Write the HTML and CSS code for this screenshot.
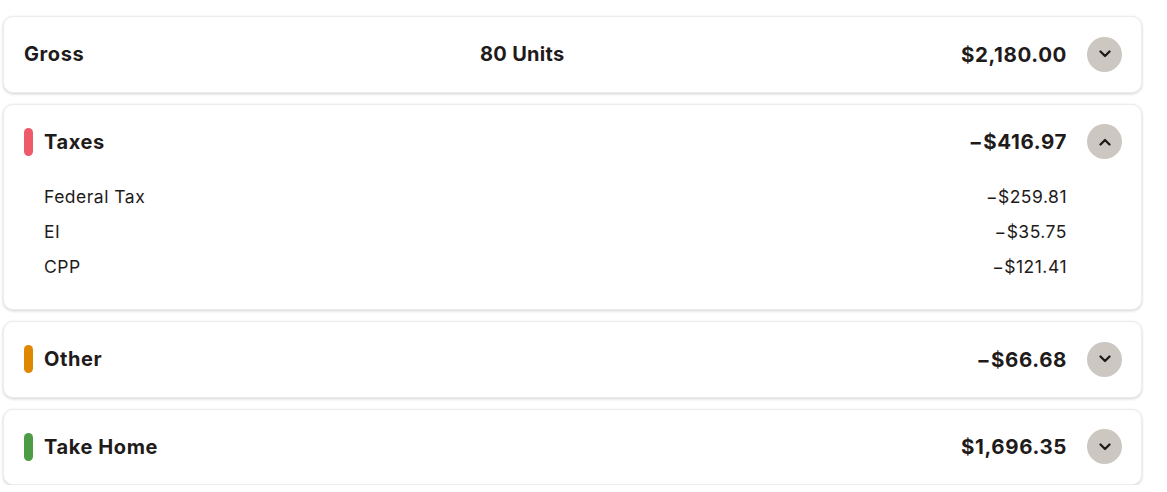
FILE: index.html
```html
<!DOCTYPE html>
<html>
<head>
<meta charset="utf-8">
<link rel="stylesheet" href="styles.css">
</head>
<body>
<div class="list">
  <div class="card">
    <div class="head">
      <div class="label label-gross">Gross</div>
      <div class="units">80 Units</div>
      <div class="amount">$2,180.00</div>
      <button class="toggle" aria-label="expand">
        <svg viewBox="0 0 12 8" width="12" height="8"><path d="M1.5 1.5 L6 6 L10.5 1.5" fill="none" stroke="#1f1b1b" stroke-width="2.3" stroke-linecap="round" stroke-linejoin="round"/></svg>
      </button>
    </div>
  </div>

  <div class="card">
    <div class="head">
      <span class="bar bar-red"></span>
      <div class="label">Taxes</div>
      <div class="amount">−$416.97</div>
      <button class="toggle" aria-label="collapse">
        <svg viewBox="0 0 12 8" width="12" height="8"><path d="M1.5 6.5 L6 2 L10.5 6.5" fill="none" stroke="#1f1b1b" stroke-width="2.3" stroke-linecap="round" stroke-linejoin="round"/></svg>
      </button>
    </div>
    <div class="rows">
      <div class="row"><span>Federal Tax</span><span>−$259.81</span></div>
      <div class="row"><span>EI</span><span>−$35.75</span></div>
      <div class="row"><span>CPP</span><span>−$121.41</span></div>
    </div>
  </div>

  <div class="card">
    <div class="head">
      <span class="bar bar-orange"></span>
      <div class="label">Other</div>
      <div class="amount">−$66.68</div>
      <button class="toggle" aria-label="expand">
        <svg viewBox="0 0 12 8" width="12" height="8"><path d="M1.5 1.5 L6 6 L10.5 1.5" fill="none" stroke="#1f1b1b" stroke-width="2.3" stroke-linecap="round" stroke-linejoin="round"/></svg>
      </button>
    </div>
  </div>

  <div class="card">
    <div class="head">
      <span class="bar bar-green"></span>
      <div class="label">Take Home</div>
      <div class="amount">$1,696.35</div>
      <button class="toggle" aria-label="expand">
        <svg viewBox="0 0 12 8" width="12" height="8"><path d="M1.5 1.5 L6 6 L10.5 1.5" fill="none" stroke="#1f1b1b" stroke-width="2.3" stroke-linecap="round" stroke-linejoin="round"/></svg>
      </button>
    </div>
  </div>
</div>
</body>
</html>
```

FILE: styles.css
```css
html, body {
  margin: 0;
  padding: 0;
  background: #ffffff;
}
body {
  font-family: Inter, "Noto Sans", sans-serif;
  color: #1f1b1b;
}
.list {
  display: flex;
  flex-direction: column;
  gap: 11px;
  padding: 16px 25px 0 3px;
}
.card {
  background: #fff;
  border: 1px solid #ececec;
  border-radius: 10px;
  box-shadow: 0 1px 3px rgba(0, 0, 0, 0.18);
}
.head {
  height: 74.5px;
  display: flex;
  align-items: center;
  padding: 0 19px 0 20px;
}
.bar {
  width: 9px;
  height: 28px;
  border-radius: 5px;
  margin-right: 11px;
  flex: none;
}
.bar-red { background: #ef5a6b; }
.bar-orange { background: #e08700; }
.bar-green { background: #4e9b46; }
.label {
  font-size: 20px;
  font-weight: 700;
  letter-spacing: 0.6px;
  flex: 1;
}
.label-gross {
  flex: 0 0 456px;
}
.units {
  font-size: 20px;
  font-weight: 700;
  flex: 1;
  letter-spacing: 0.3px;
}
.amount {
  font-size: 20.5px;
  font-weight: 700;
  letter-spacing: 0.6px;
}
.toggle {
  width: 35px;
  height: 35px;
  border-radius: 50%;
  border: none;
  background: #cdc7c1;
  margin-left: 20px;
  padding: 0;
  display: flex;
  align-items: center;
  justify-content: center;
  flex: none;
}
.rows {
  padding: 0 74px 25px 40px;
}
.row {
  height: 35px;
  display: flex;
  justify-content: space-between;
  align-items: center;
  font-size: 17.5px;
  font-weight: 400;
  letter-spacing: 0.5px;
}
```
